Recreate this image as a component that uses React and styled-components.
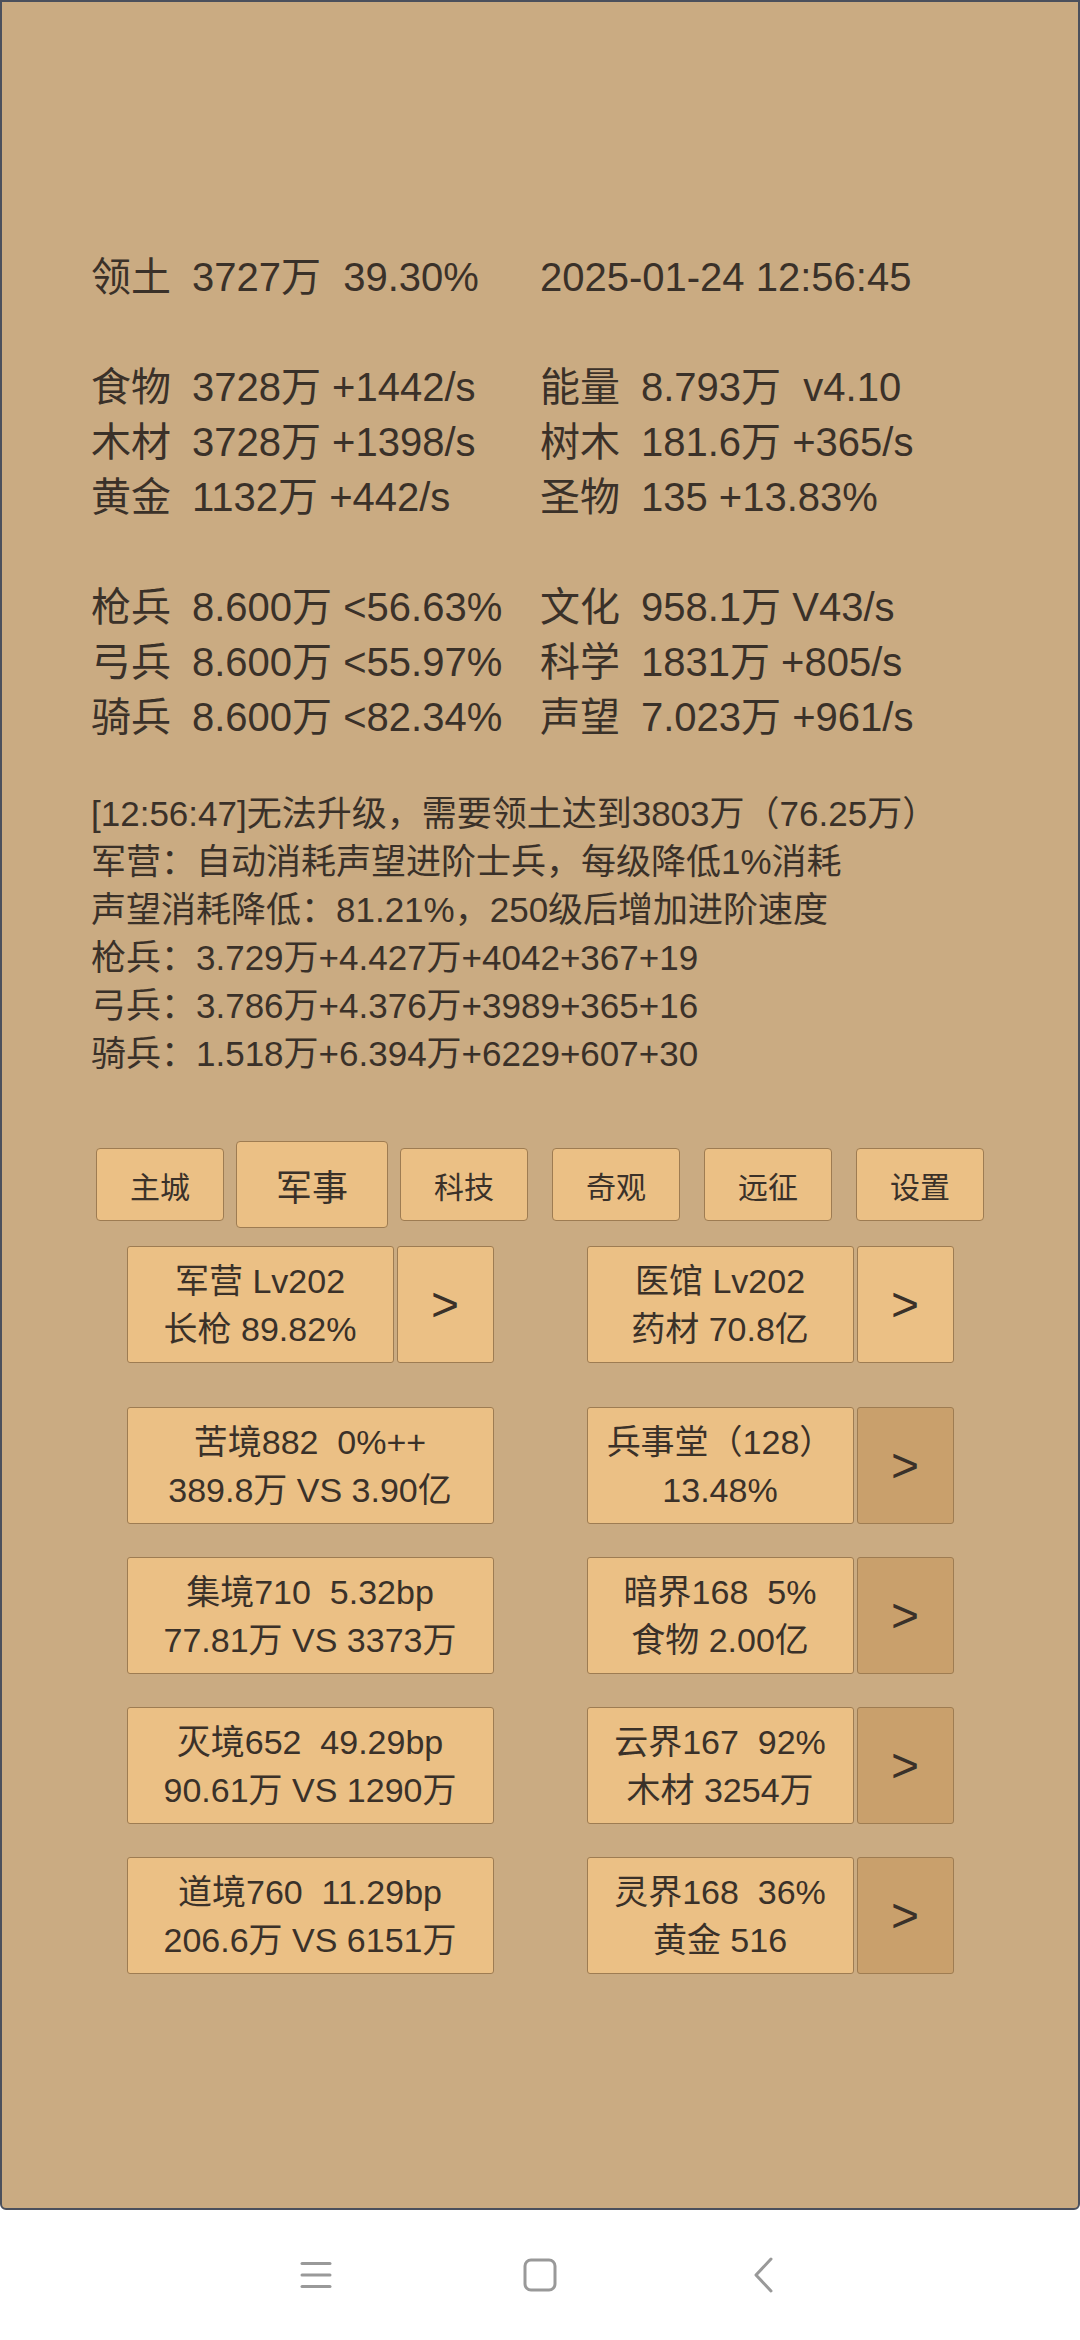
import React from "react";
import styled, { createGlobalStyle } from "styled-components";

const GlobalStyle = createGlobalStyle`
  html, body { margin: 0; padding: 0; background: #ffffff; }
  body {
    font-family: "Liberation Sans", "Noto Sans CJK SC", "Noto Sans", sans-serif;
    color: #3a3129;
  }
  * { box-sizing: border-box; }
`;

const Screen = styled.div`
  width: 1080px;
  height: 2340px;
  display: flex;
  flex-direction: column;
`;

const Panel = styled.div`
  height: 2210px;
  background: #caab82;
  border: 2px solid #4b505c;
  border-radius: 0 0 6px 6px;
  padding-top: 248px;
  display: flex;
  flex-direction: column;
`;

const StatsGrid = styled.div`
  display: grid;
  grid-template-columns: 449px auto;
  padding-left: 89px;
  font-size: 40px;
  line-height: 55px;
`;

const StatCell = styled.div`
  display: flex;
  height: 55px;
  white-space: pre;
`;

const StatLabel = styled.span`
  width: 101px;
  flex: none;
`;

const StatValue = styled.span``;

const Blank = styled.div`
  grid-column: 1 / span 2;
  height: 55px;
`;

const Messages = styled.div`
  margin-top: 45px;
  padding-left: 89px;
  font-size: 35px;
  line-height: 48px;
`;

const MsgLine = styled.div`
  white-space: pre;
`;

const Tabs = styled.div`
  margin-top: 63px;
  display: grid;
  grid-template-columns: repeat(6, 152px);
  justify-content: center;
  align-items: center;
  height: 87px;
`;

const Tab = styled.div`
  justify-self: center;
  width: ${(p) => (p.$active ? 152 : 128)}px;
  height: ${(p) => (p.$active ? 87 : 73)}px;
  display: flex;
  align-items: center;
  justify-content: center;
  background: #ebc085;
  border: 1.5px solid #9e7c52;
  border-radius: 4px;
  font-size: ${(p) => (p.$active ? 36 : 30)}px;
`;

const CardRows = styled.div`
  margin-top: 18px;
  display: flex;
  flex-direction: column;
  gap: 33px;
`;

const CardRow = styled.div`
  display: flex;
  justify-content: center;
  gap: 93px;
  margin-bottom: ${(p) => (p.$first ? 11 : 0)}px;
`;

const Group = styled.div`
  width: 367px;
  display: flex;
  gap: 3px;
`;

const Card = styled.div`
  flex: 1;
  height: 117px;
  display: flex;
  flex-direction: column;
  align-items: center;
  justify-content: center;
  background: #ebc085;
  border: 1.5px solid #9e7c52;
  border-radius: 3px;
  font-size: 34px;
  line-height: 48px;
  white-space: pre;
`;

const Arrow = styled.div`
  width: 97px;
  flex: none;
  height: 117px;
  display: flex;
  align-items: center;
  justify-content: center;
  background: ${(p) => (p.$dark ? "#c9a06c" : "#ebc085")};
  border: 1.5px solid #9e7c52;
  border-radius: 3px;
  font-size: 48px;
`;

const NavBar = styled.div`
  flex: 1;
  background: #ffffff;
  display: flex;
  justify-content: center;
  align-items: center;
  padding-bottom: 1px;
`;

const NavSlot = styled.div`
  width: 224px;
  display: flex;
  justify-content: center;
  align-items: center;
`;

const stats = [
  [["领土", "3727万  39.30%"], [null, "2025-01-24 12:56:45"]],
  null,
  [["食物", "3728万 +1442/s"], ["能量", "8.793万  v4.10"]],
  [["木材", "3728万 +1398/s"], ["树木", "181.6万 +365/s"]],
  [["黄金", "1132万 +442/s"], ["圣物", "135 +13.83%"]],
  null,
  [["枪兵", "8.600万 <56.63%"], ["文化", "958.1万 V43/s"]],
  [["弓兵", "8.600万 <55.97%"], ["科学", "1831万 +805/s"]],
  [["骑兵", "8.600万 <82.34%"], ["声望", "7.023万 +961/s"]],
];

const messages = [
  "[12:56:47]无法升级，需要领土达到3803万（76.25万）",
  "军营：自动消耗声望进阶士兵，每级降低1%消耗",
  "声望消耗降低：81.21%，250级后增加进阶速度",
  "枪兵：3.729万+4.427万+4042+367+19",
  "弓兵：3.786万+4.376万+3989+365+16",
  "骑兵：1.518万+6.394万+6229+607+30",
];

const tabs = ["主城", "军事", "科技", "奇观", "远征", "设置"];

const rows = [
  {
    left: { lines: ["军营 Lv202", "长枪 89.82%"], arrow: true },
    right: { lines: ["医馆 Lv202", "药材 70.8亿"], arrow: true },
    first: true,
  },
  {
    left: { lines: ["苦境882  0%++", "389.8万 VS 3.90亿"] },
    right: { lines: ["兵事堂（128）", "13.48%"], arrow: true, dark: true },
  },
  {
    left: { lines: ["集境710  5.32bp", "77.81万 VS 3373万"] },
    right: { lines: ["暗界168  5%", "食物 2.00亿"], arrow: true, dark: true },
  },
  {
    left: { lines: ["灭境652  49.29bp", "90.61万 VS 1290万"] },
    right: { lines: ["云界167  92%", "木材 3254万"], arrow: true, dark: true },
  },
  {
    left: { lines: ["道境760  11.29bp", "206.6万 VS 6151万"] },
    right: { lines: ["灵界168  36%", "黄金 516"], arrow: true, dark: true },
  },
];

function Stat({ item }) {
  const [label, value] = item;
  return (
    <StatCell>
      {label && <StatLabel>{label}</StatLabel>}
      <StatValue>{value}</StatValue>
    </StatCell>
  );
}

function CardGroup({ data }) {
  return (
    <Group>
      <Card>
        {data.lines.map((l, i) => (
          <div key={i}>{l}</div>
        ))}
      </Card>
      {data.arrow && <Arrow $dark={data.dark}>&gt;</Arrow>}
    </Group>
  );
}

export default function App() {
  return (
    <>
      <GlobalStyle />
      <Screen>
        <Panel>
          <StatsGrid>
            {stats.map((row, i) =>
              row ? (
                <React.Fragment key={i}>
                  <Stat item={row[0]} />
                  <Stat item={row[1]} />
                </React.Fragment>
              ) : (
                <Blank key={i} />
              )
            )}
          </StatsGrid>
          <Messages>
            {messages.map((m, i) => (
              <MsgLine key={i}>{m}</MsgLine>
            ))}
          </Messages>
          <Tabs>
            {tabs.map((t) => (
              <Tab key={t} $active={t === "军事"}>
                {t}
              </Tab>
            ))}
          </Tabs>
          <CardRows>
            {rows.map((r, i) => (
              <CardRow key={i} $first={r.first}>
                <CardGroup data={r.left} />
                <CardGroup data={r.right} />
              </CardRow>
            ))}
          </CardRows>
        </Panel>
        <NavBar>
          <NavSlot>
            <svg width="34" height="30" viewBox="0 0 34 30">
              <g stroke="#999" strokeWidth="3" strokeLinecap="round">
                <line x1="3" y1="3.5" x2="31" y2="3.5" />
                <line x1="3" y1="15" x2="31" y2="15" />
                <line x1="3" y1="26.5" x2="31" y2="26.5" />
              </g>
            </svg>
          </NavSlot>
          <NavSlot>
            <svg width="36" height="36" viewBox="0 0 36 36">
              <rect x="3" y="3" width="30" height="30" rx="6" fill="none" stroke="#999" strokeWidth="3" />
            </svg>
          </NavSlot>
          <NavSlot>
            <svg width="24" height="36" viewBox="0 0 24 36">
              <polyline points="19,2 4,18 19,34" fill="none" stroke="#999" strokeWidth="3" strokeLinecap="round" strokeLinejoin="round" />
            </svg>
          </NavSlot>
        </NavBar>
      </Screen>
    </>
  );
}
